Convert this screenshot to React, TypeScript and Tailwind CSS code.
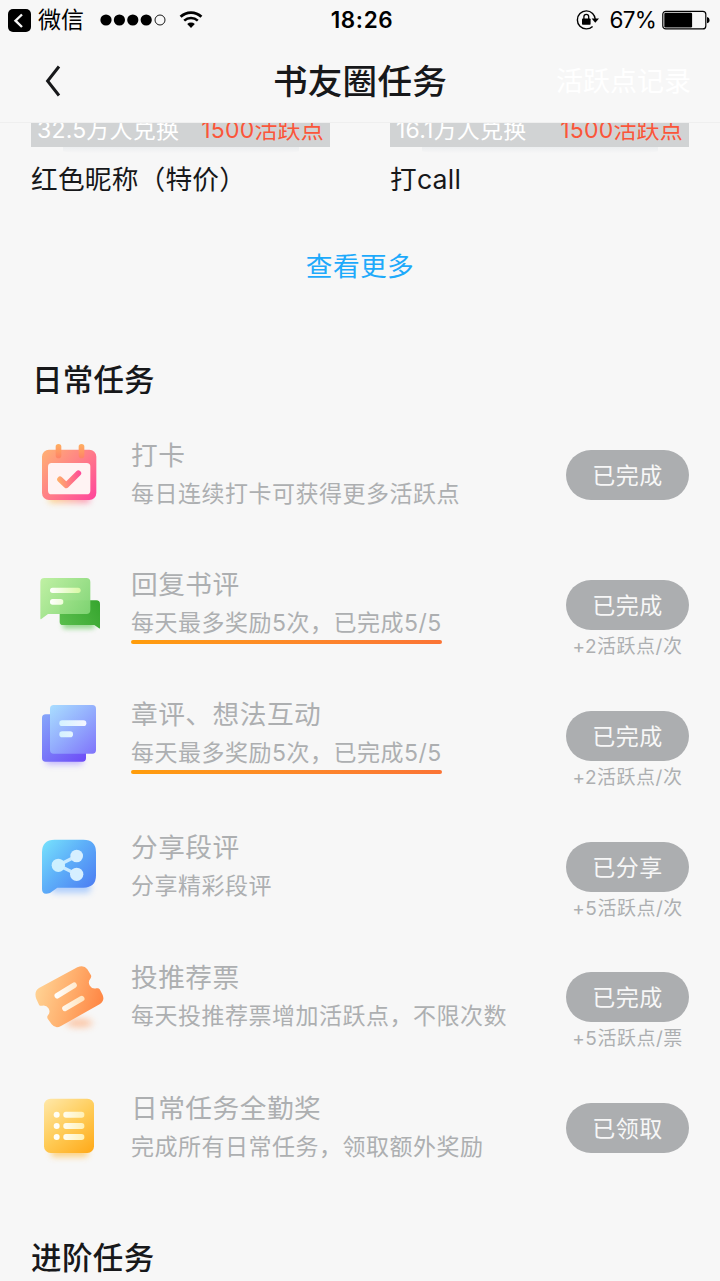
import React from 'react';

interface Task {
  title: string;
  desc: string;
  action: string;
  note?: string;
  underline?: boolean;
  icon: React.ReactNode;
}

interface Reward {
  name: string;
  count: string;
  price: string;
}

// === 任务图标 ===
function CheckInIcon() {
  return (
    <svg viewBox="30 -1 270 270" className="h-[90px] w-[90px]">
      <defs>
        <linearGradient id="ci" x1="70" y1="60" x2="228" y2="205" gradientUnits="userSpaceOnUse">
          <stop offset="0" stopColor="#ffb074" />
          <stop offset="0.5" stopColor="#ff7d88" />
          <stop offset="1" stopColor="#ff459c" />
        </linearGradient>
        <linearGradient id="ciCheck" x1="112" y1="150" x2="184" y2="140" gradientUnits="userSpaceOnUse">
          <stop offset="0" stopColor="#ffb069" />
          <stop offset="1" stopColor="#ff4a98" />
        </linearGradient>
        <linearGradient id="ciPin" x1="0" y1="42" x2="0" y2="84" gradientUnits="userSpaceOnUse">
          <stop offset="0" stopColor="#ffae62" />
          <stop offset="1" stopColor="#ff8266" />
        </linearGradient>
        <linearGradient id="ciGlow" x1="75" y1="0" x2="225" y2="0" gradientUnits="userSpaceOnUse">
          <stop offset="0" stopColor="#ffd65c" />
          <stop offset="1" stopColor="#ff62a8" />
        </linearGradient>
        <filter id="ciBlur" x="-30%" y="-120%" width="160%" height="340%">
          <feGaussianBlur stdDeviation="9" />
        </filter>
      </defs>
      <rect x="86" y="190" width="124" height="28" rx="10" fill="url(#ciGlow)" opacity="0.7" filter="url(#ciBlur)" />
      <rect x="66" y="58" width="163" height="151" rx="21" fill="url(#ci)" />
      <rect x="84" y="98" width="127" height="94" rx="11" fill="#fff3f3" />
      <rect x="107" y="41" width="17" height="43" rx="8.5" fill="url(#ciPin)" />
      <rect x="176" y="41" width="17" height="43" rx="8.5" fill="url(#ciPin)" />
      <path d="M120 147 L139 165 L175 129" fill="none" stroke="url(#ciCheck)" strokeWidth="17" strokeLinecap="round" strokeLinejoin="round" />
    </svg>
  );
}

function ReplyIcon() {
  return (
    <svg viewBox="30 0 270 270" className="h-[90px] w-[90px]">
      <defs>
        <linearGradient id="rpBack" x1="125" y1="195" x2="240" y2="130" gradientUnits="userSpaceOnUse">
          <stop offset="0" stopColor="#59bd4c" />
          <stop offset="1" stopColor="#37a62f" />
        </linearGradient>
        <linearGradient id="rpFront" x1="62" y1="55" x2="210" y2="165" gradientUnits="userSpaceOnUse">
          <stop offset="0" stopColor="#bdf0a0" />
          <stop offset="1" stopColor="#80d474" />
        </linearGradient>
        <linearGradient id="rpLine" x1="90" y1="0" x2="182" y2="0" gradientUnits="userSpaceOnUse">
          <stop offset="0" stopColor="#ffffff" />
          <stop offset="1" stopColor="#d8f9a4" />
        </linearGradient>
        <filter id="rpBlur" x="-30%" y="-120%" width="160%" height="340%">
          <feGaussianBlur stdDeviation="8" />
        </filter>
      </defs>
      <rect x="128" y="182" width="96" height="24" rx="8" fill="#63c75a" opacity="0.65" filter="url(#rpBlur)" />
      <path d="M129 121 H229 Q240 121 240 132 V204 Q240 207 237 205 L223 195 H129 Q119 195 119 185 V131 Q119 121 129 121Z" fill="url(#rpBack)" />
      <path d="M73 54 H199 Q211 54 211 66 V150 Q211 162 199 162 H84 L64 177 Q61 179 61 175 V66 Q61 54 73 54Z" fill="url(#rpFront)" fillOpacity="0.96" />
      <rect x="90" y="83" width="92" height="16" rx="8" fill="url(#rpLine)" />
      <rect x="90" y="117" width="40" height="17" rx="8" fill="url(#rpLine)" />
    </svg>
  );
}

function NoteIcon() {
  return (
    <svg viewBox="30 2 270 270" className="h-[90px] w-[90px]">
      <defs>
        <linearGradient id="ntBack" x1="66" y1="75" x2="195" y2="215" gradientUnits="userSpaceOnUse">
          <stop offset="0" stopColor="#86a6fa" />
          <stop offset="1" stopColor="#6d4bf7" />
        </linearGradient>
        <linearGradient id="ntFront" x1="92" y1="45" x2="226" y2="190" gradientUnits="userSpaceOnUse">
          <stop offset="0" stopColor="#a9ddff" />
          <stop offset="0.5" stopColor="#93acfd" />
          <stop offset="1" stopColor="#8074fb" />
        </linearGradient>
        <linearGradient id="ntLine" x1="118" y1="0" x2="200" y2="0" gradientUnits="userSpaceOnUse">
          <stop offset="0" stopColor="#d4f3ff" />
          <stop offset="1" stopColor="#f4f5ff" />
        </linearGradient>
        <filter id="ntBlur" x="-30%" y="-120%" width="160%" height="340%">
          <feGaussianBlur stdDeviation="9" />
        </filter>
      </defs>
      <rect x="78" y="196" width="110" height="26" rx="8" fill="#a08cff" opacity="0.65" filter="url(#ntBlur)" />
      <rect x="66" y="72" width="132" height="142" rx="11" fill="url(#ntBack)" />
      <rect x="90" y="44" width="138" height="146" rx="11" fill="url(#ntFront)" />
      <rect x="118" y="90" width="81" height="17" rx="8.5" fill="url(#ntLine)" />
      <rect x="118" y="123" width="41" height="18" rx="8.5" fill="url(#ntLine)" />
    </svg>
  );
}

function ShareIcon() {
  return (
    <svg viewBox="30 -11 270 270" className="h-[90px] w-[90px]">
      <defs>
        <linearGradient id="sh" x1="68" y1="50" x2="222" y2="190" gradientUnits="userSpaceOnUse">
          <stop offset="0" stopColor="#76e0fc" />
          <stop offset="0.45" stopColor="#5eb0f9" />
          <stop offset="1" stopColor="#4c7cf2" />
        </linearGradient>
        <filter id="shBlur" x="-30%" y="-120%" width="160%" height="340%">
          <feGaussianBlur stdDeviation="9" />
        </filter>
      </defs>
      <rect x="94" y="168" width="118" height="34" rx="12" fill="#82b4ff" opacity="0.6" filter="url(#shBlur)" />
      <path d="M104 42 H190 Q228 42 228 80 V149 Q228 186 190 186 H112 L90 202 Q66 210 66 190 V80 Q66 42 104 42Z" fill="url(#sh)" />
      <path d="M170 91 L115 119 L170 146" fill="none" stroke="#c9eaff" strokeWidth="10" />
      <circle cx="170" cy="91" r="19" fill="#d6efff" />
      <circle cx="115" cy="119" r="20" fill="#cdf0ff" />
      <circle cx="170" cy="146" r="20" fill="#d6efff" />
    </svg>
  );
}

function TicketIcon() {
  return (
    <svg viewBox="30 5 270 270" className="h-[90px] w-[90px]">
      <defs>
        <linearGradient id="tk" x1="55" y1="115" x2="240" y2="165" gradientUnits="userSpaceOnUse">
          <stop offset="0" stopColor="#ffd091" />
          <stop offset="0.5" stopColor="#ffae6c" />
          <stop offset="1" stopColor="#ff8846" />
        </linearGradient>
        <linearGradient id="tkLine" x1="105" y1="0" x2="192" y2="0" gradientUnits="userSpaceOnUse">
          <stop offset="0" stopColor="#ffffff" />
          <stop offset="1" stopColor="#ffe3bd" />
        </linearGradient>
        <filter id="tkBlur" x="-50%" y="-150%" width="200%" height="400%">
          <feGaussianBlur stdDeviation="11" />
        </filter>
      </defs>
      <ellipse cx="178" cy="218" rx="40" ry="13" fill="#ff9a5c" opacity="0.55" filter="url(#tkBlur)" />
      <path
        d="M57 113 L172 51 Q192 43 202 57 L213 75 Q215 80 211 85 A18 18 0 0 0 229 114 Q236 112 239 117 L247 132 Q256 150 240 161 L123 227 Q106 236 95 222 L83 205 Q80 199 84 195 A18 18 0 0 0 66 166 Q60 168 57 163 L49 146 Q41 124 57 113Z"
        fill="url(#tk)"
      />
      <path d="M112 136 L162 105" stroke="url(#tkLine)" strokeWidth="17" strokeLinecap="round" />
      <path d="M135 174 L185 145" stroke="url(#tkLine)" strokeWidth="17" strokeLinecap="round" />
    </svg>
  );
}

function ListIcon() {
  return (
    <svg viewBox="30 -7 270 270" className="h-[90px] w-[90px]">
      <defs>
        <linearGradient id="ls" x1="80" y1="45" x2="205" y2="205" gradientUnits="userSpaceOnUse">
          <stop offset="0" stopColor="#ffe6a4" />
          <stop offset="0.5" stopColor="#ffcc58" />
          <stop offset="1" stopColor="#ffab1c" />
        </linearGradient>
        <linearGradient id="lsLine" x1="130" y1="0" x2="193" y2="0" gradientUnits="userSpaceOnUse">
          <stop offset="0" stopColor="#fffdf0" />
          <stop offset="1" stopColor="#fff0b5" />
        </linearGradient>
        <filter id="lsBlur" x="-30%" y="-120%" width="160%" height="340%">
          <feGaussianBlur stdDeviation="9" />
        </filter>
      </defs>
      <rect x="94" y="188" width="110" height="26" rx="8" fill="#ffc04a" opacity="0.7" filter="url(#lsBlur)" />
      <rect x="72" y="40" width="150" height="163" rx="20" fill="url(#ls)" />
      {[88, 122, 155].map((y) => (
        <g key={y}>
          <circle cx="110" cy={y} r="9" fill="#fffef6" />
          <rect x="130" y={y - 9} width="63" height="18" rx="8" fill="url(#lsLine)" />
        </g>
      ))}
    </svg>
  );
}

const rewards: Reward[] = [
  { name: '红色昵称（特价）', count: '32.5万人兑换', price: '1500活跃点' },
  { name: '打call', count: '16.1万人兑换', price: '1500活跃点' },
];

const tasks: Task[] = [
  { title: '打卡', desc: '每日连续打卡可获得更多活跃点', action: '已完成', icon: <CheckInIcon /> },
  { title: '回复书评', desc: '每天最多奖励5次，已完成5/5', action: '已完成', note: '+2活跃点/次', underline: true, icon: <ReplyIcon /> },
  { title: '章评、想法互动', desc: '每天最多奖励5次，已完成5/5', action: '已完成', note: '+2活跃点/次', underline: true, icon: <NoteIcon /> },
  { title: '分享段评', desc: '分享精彩段评', action: '已分享', note: '+5活跃点/次', icon: <ShareIcon /> },
  { title: '投推荐票', desc: '每天投推荐票增加活跃点，不限次数', action: '已完成', note: '+5活跃点/票', icon: <TicketIcon /> },
  { title: '日常任务全勤奖', desc: '完成所有日常任务，领取额外奖励', action: '已领取', icon: <ListIcon /> },
];

// === 系统状态栏 ===
function StatusBar() {
  return (
    <div className="grid h-10 grid-cols-[1fr_auto_1fr] items-center px-2 text-black">
      <div className="flex items-center">
        <div className="flex h-[23px] w-[23px] items-center justify-center rounded-[5px] bg-black">
          <svg viewBox="0 0 23 23" className="h-[23px] w-[23px]">
            <path d="M14 5.5 L7.5 11.7 L14 18" fill="none" stroke="#f7f7f7" strokeWidth="2.4" />
          </svg>
        </div>
        <span className="ml-[7px] text-[23px] leading-10">微信</span>
        <svg viewBox="0 0 66 12" className="ml-[16px] h-3 w-[66px]">
          {[6, 19.4, 32.8, 46.2].map((x) => (
            <circle key={x} cx={x} cy="6" r="5.6" fill="#000" />
          ))}
          <circle cx="60" cy="6" r="5" fill="none" stroke="#000" strokeWidth="0.9" />
        </svg>
        <svg viewBox="0 0 24 18" className="ml-[13px] h-[18px] w-6">
          <path d="M1.6 5.8 A15 15 0 0 1 22.4 5.8" fill="none" stroke="#000" strokeWidth="2.8" />
          <path d="M5.2 9.6 A10 10 0 0 1 18.8 9.6" fill="none" stroke="#000" strokeWidth="2.6" />
          <path d="M8.2 13 A5.6 5.6 0 0 1 15.8 13 L12 17Z" fill="#000" />
        </svg>
      </div>
      <span className="pl-1 text-[22.5px] font-semibold leading-10 tracking-[0.6px]">18:26</span>
      <div className="flex items-center justify-end pr-[2px]">
        <svg viewBox="0 0 23 20" className="h-5 w-[23px]">
          <path d="M16.6 3.4 A9 9 0 1 0 16.6 16.4 M16.6 3.4 A9 9 0 0 1 19.2 9" fill="none" stroke="#000" strokeWidth="1.4" />
          <path d="M15.6 8.6 H23 L19.3 12.8Z" fill="#000" />
          <rect x="6" y="8.4" width="8.6" height="6.4" rx="0.8" fill="#000" />
          <path d="M7.9 9 V6.8 A2.4 2.4 0 0 1 12.7 6.8 V9" fill="none" stroke="#000" strokeWidth="1.3" />
        </svg>
        <span className="ml-[11px] text-[22.5px] leading-10 tracking-[-0.8px]">67%</span>
        <svg viewBox="0 0 48 20" className="ml-[6px] h-5 w-12">
          <rect x="0.8" y="1.3" width="43" height="17.6" rx="3" fill="none" stroke="#000" strokeWidth="1.2" />
          <rect x="2.3" y="2.8" width="27.8" height="14.6" rx="1.2" fill="#000" />
          <path d="M45 7 Q47.6 7.4 47.6 10 Q47.6 12.8 45 13.2Z" fill="#000" />
        </svg>
      </div>
    </div>
  );
}

function RewardCard({ name, count, price }: Reward) {
  return (
    <div className="w-[299px]">
      {/* 底部信息条，上半部分被导航栏遮住 */}
      <div className="flex h-6 items-end justify-between overflow-hidden bg-[#d1d3d4] pl-[6px] pr-[6px] text-[23px] leading-[34px] tracking-[0.2px]">
        <span className="text-white">{count}</span>
        <span className="text-[#fb5539]">{price}</span>
      </div>
      <div className="mx-auto h-2 w-[236px] rounded-b-[50%] bg-linear-to-b from-[#eceef0] to-[#f7f7f7] to-80%" />
      <div className="h-12 text-[26.7px] leading-12 tracking-[0.2px] text-[#17181a]">{name}</div>
    </div>
  );
}

function TaskRow({ title, desc, action, note, underline, icon }: Task) {
  return (
    <div className="flex h-[130.6px] items-center pl-[30px] pr-[31px] text-[#adafb1]">
      {icon}
      <div className={`ml-[11px] flex-1 ${underline ? 'pb-0.5' : ''}`}>
        <div className="text-[26.7px] leading-[39px] tracking-[0.5px]">{title}</div>
        <div className="text-[23px] leading-[39px] tracking-[0.5px]">{desc}</div>
        {underline && <div className="-mt-[3px] h-1 w-[311px] rounded-full bg-linear-to-r from-[#ff9d0a] to-[#fb7435]" />}
      </div>
      <div className="flex h-[50px] w-[123px] flex-col items-center">
        <button className="h-[50px] w-full shrink-0 rounded-full bg-[#acaeb0] pt-px text-[23px] leading-[50px] tracking-[0.5px] text-[#f7f7f7]">
          {action}
        </button>
        {note && <span className="text-[19px] leading-[34px] tracking-[0.5px] whitespace-nowrap">{note}</span>}
      </div>
    </div>
  );
}

export default function App() {
  return (
    <div className="flex h-[1281px] w-[720px] flex-col overflow-hidden bg-[#f7f7f7] font-['Inter','Noto_Sans_CJK_SC',sans-serif] font-[390]">
      <StatusBar />

      <header className="grid h-[83px] shrink-0 grid-cols-[1fr_auto_1fr] items-center border-b border-[#efefef] px-[29px]">
        <svg viewBox="0 0 16 32" className="ml-4 h-8 w-4">
          <path d="M14 1.5 L2.6 16 L14 30.5" fill="none" stroke="#17181a" strokeWidth="3" />
        </svg>
        <h1 className="text-[34.6px] font-medium leading-[50px] tracking-[0.2px] text-[#17181a]">书友圈任务</h1>
        <span className="pt-[2px] text-right text-[27px] leading-10 text-white">活跃点记录</span>
      </header>

      <section className="flex shrink-0 gap-[60px] pl-[31px]">
        {rewards.map((item) => (
          <RewardCard key={item.name} {...item} />
        ))}
      </section>

      <a className="mt-[39px] h-12 shrink-0 text-center text-[26.7px] leading-12 tracking-[0.4px] text-[#1eaafb]">查看更多</a>

      <h2 className="mt-[66px] h-12 shrink-0 pl-8 text-[30.5px] font-medium leading-12 tracking-[0.2px] text-[#17181a]">日常任务</h2>

      <section className="mt-[5.5px] shrink-0">
        {tasks.map((task) => (
          <TaskRow key={task.title} {...task} />
        ))}
      </section>

      <h2 className="mt-[41px] h-12 shrink-0 pl-[31px] text-[30.5px] font-medium leading-12 tracking-[0.4px] text-[#17181a]">进阶任务</h2>
    </div>
  );
}
